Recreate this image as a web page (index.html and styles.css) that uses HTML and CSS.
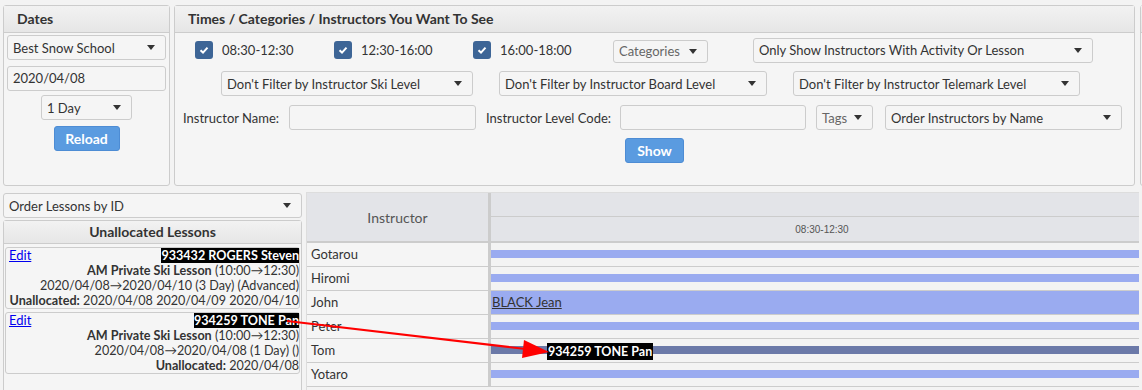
FILE: index.html
```html
<!DOCTYPE html>
<html lang="en">
<head>
    <meta charset="UTF-8">
    <title>Lesson Allocation</title>
    <link rel="stylesheet" href="styles.css">
</head>
<body>
    <div class="top">
        <div class="panel dates">
            <div class="panel-head">Dates</div>
            <div class="dates-body">
                <div class="sel school"><span>Best Snow School</span><span class="caret"></span></div>
                <div class="field date">2020/04/08</div>
                <div class="sel days"><span>1 Day</span><span class="caret"></span></div>
                <button class="btn reload">Reload</button>
            </div>
        </div>

        <div class="panel times">
            <div class="panel-head">Times / Categories / Instructors You Want To See</div>
            <div class="row row1">
                <label class="check"><span class="box"><svg width="12" height="12" viewBox="0 0 12 12"><path d="M2.5 6.3 L5 8.6 L9.5 3.6" fill="none" stroke="#fff" stroke-width="2"/></svg></span>08:30-12:30</label>
                <label class="check"><span class="box"><svg width="12" height="12" viewBox="0 0 12 12"><path d="M2.5 6.3 L5 8.6 L9.5 3.6" fill="none" stroke="#fff" stroke-width="2"/></svg></span>12:30-16:00</label>
                <label class="check"><span class="box"><svg width="12" height="12" viewBox="0 0 12 12"><path d="M2.5 6.3 L5 8.6 L9.5 3.6" fill="none" stroke="#fff" stroke-width="2"/></svg></span>16:00-18:00</label>
                <div class="sel muted categories"><span>Categories</span><span class="caret"></span></div>
                <div class="sel activity"><span>Only Show Instructors With Activity Or Lesson</span><span class="caret"></span></div>
            </div>
            <div class="row row2">
                <div class="sel ski"><span>Don't Filter by Instructor Ski Level</span><span class="caret"></span></div>
                <div class="sel board"><span>Don't Filter by Instructor Board Level</span><span class="caret"></span></div>
                <div class="sel telemark"><span>Don't Filter by Instructor Telemark Level</span><span class="caret"></span></div>
            </div>
            <div class="row row3">
                <span class="lbl name-lbl">Instructor Name:</span>
                <div class="field name-in"></div>
                <span class="lbl code-lbl">Instructor Level Code:</span>
                <div class="field code-in"></div>
                <div class="sel muted tags"><span>Tags</span><span class="caret"></span></div>
                <div class="sel order-ins"><span>Order Instructors by Name</span><span class="caret"></span></div>
            </div>
            <div class="row row4">
                <button class="btn show">Show</button>
            </div>
        </div>

        <div class="panel extra">
            <div class="panel-head"></div>
        </div>
    </div>

    <div class="bottom">
        <div class="left">
            <div class="sel order-lessons"><span>Order Lessons by ID</span><span class="caret"></span></div>
            <div class="panel lessons">
                <div class="lessons-head">Unallocated Lessons</div>
                <div class="card">
                    <div class="card-top"><a href="#">Edit</a><span class="tag">933432 ROGERS Steven</span></div>
                    <div><b>AM Private Ski Lesson</b> (10:00→12:30)</div>
                    <div>2020/04/08→2020/04/10 (3 Day) (Advanced)</div>
                    <div><b>Unallocated:</b> 2020/04/08 2020/04/09 2020/04/10</div>
                </div>
                <div class="card">
                    <div class="card-top"><a href="#">Edit</a><span class="tag">934259 TONE Pan</span></div>
                    <div><b>AM Private Ski Lesson</b> (10:00→12:30)</div>
                    <div>2020/04/08→2020/04/08 (1 Day) ()</div>
                    <div><b>Unallocated:</b> 2020/04/08</div>
                </div>
            </div>
        </div>

        <div class="grid">
            <div class="g-head">
                <div class="g-name-head">Instructor</div>
                <div class="g-time">
                    <div class="g-time-top"></div>
                    <div class="g-time-bot">08:30-12:30</div>
                </div>
            </div>
            <div class="g-row"><div class="g-name">Gotarou</div><div class="g-cell"><div class="bar"></div></div></div>
            <div class="g-row"><div class="g-name">Hiromi</div><div class="g-cell"><div class="bar"></div></div></div>
            <div class="g-row"><div class="g-name">John</div><div class="g-cell"><div class="bar full"><a href="#">BLACK Jean</a></div></div></div>
            <div class="g-row"><div class="g-name">Peter</div><div class="g-cell"><div class="bar"></div></div></div>
            <div class="g-row"><div class="g-name">Tom</div><div class="g-cell"><div class="bar dark"></div></div></div>
            <div class="g-row"><div class="g-name">Yotaro</div><div class="g-cell"><div class="bar"></div></div></div>
        </div>
    </div>

    <!-- lesson being dragged onto Tom -->
    <div class="drag">934259 TONE Pan</div>
    <svg class="arrow" width="1142" height="390">
        <line x1="287" y1="321" x2="526" y2="349" stroke="#f00" stroke-width="2"/>
        <polygon points="549,352 524,340 522,358" fill="#f00"/>
    </svg>
</body>
</html>
```

FILE: styles.css
```css
body {
  margin: 0;
  padding: 5px 3px 0;
  width: 1142px;
  height: 390px;
  box-sizing: border-box;
  overflow: hidden;
  position: relative;
  background-color: #f3f3f3;
  font-family: Lato, "Open Sans", sans-serif;
  font-size: 13px;
  color: #333;
}

.top {
  display: flex;
  gap: 4px;
  height: 181px;
}

.panel {
  flex-shrink: 0;
  box-sizing: border-box;
  border: 1px solid #ccc;
  border-radius: 3px;
  background-color: #f5f5f5;
}

.panel-head {
  height: 26px;
  line-height: 26px;
  padding-left: 13px;
  border-bottom: 1px solid #ccc;
  background: linear-gradient(#f2f2f2, #e6e6e6);
  font-weight: bold;
  font-size: 14px;
  white-space: nowrap;
}

.dates { width: 167px; }
.times { width: 961px; }
.extra { width: 200px; margin-left: 1px; }

/* selects and inputs */
.sel {
  display: flex;
  align-items: center;
  justify-content: space-between;
  flex-shrink: 0;
  box-sizing: border-box;
  height: 25px;
  padding: 0 10px 0 5px;
  border: 1px solid #ccc;
  border-radius: 3px;
  background-color: #f5f5f5;
  white-space: nowrap;
}

.sel.muted { color: #666; }

.caret {
  width: 0;
  height: 0;
  border-left: 4px solid transparent;
  border-right: 4px solid transparent;
  border-top: 5px solid #333;
}

.field {
  flex-shrink: 0;
  box-sizing: border-box;
  height: 25px;
  line-height: 23px;
  padding: 0 5px;
  border: 1px solid #ccc;
  border-radius: 3px;
  background-color: #f5f5f5;
}

.btn {
  box-sizing: border-box;
  height: 25px;
  border: 1px solid #4d8cd4;
  border-radius: 3px;
  background-color: #5a9be0;
  color: white;
  font-family: inherit;
  font-size: 14px;
  font-weight: bold;
  cursor: pointer;
}

/* dates panel */
.dates-body {
  display: flex;
  flex-direction: column;
  align-items: center;
  padding: 2px 2px 0;
}

.school, .date { width: 159px; }
.date { margin-top: 6px; }
.days { width: 91px; margin-top: 4px; }
.reload { width: 66px; margin-top: 6px; }

/* times panel */
.row {
  display: flex;
  align-items: center;
}

.row1 { margin-top: 5px; height: 24px; padding-left: 20px; }
.row2 { margin-top: 9px; height: 25px; padding-left: 46px; gap: 26px; }
.row3 { margin-top: 9px; height: 25px; padding-left: 8px; }
.row4 { margin-top: 8px; padding-left: 450px; }

.check {
  display: flex;
  align-items: center;
  gap: 9px;
  width: 139px;
  flex-shrink: 0;
}

.box {
  display: flex;
  align-items: center;
  justify-content: center;
  width: 18px;
  height: 18px;
  border-radius: 3px;
  background-color: #3d6596;
}

.categories { width: 95px; height: 23px; margin-left: 1px; margin-top: 2px; }
.activity { width: 340px; margin-left: 45px; }

.ski { width: 252px; }
.board { width: 268px; }
.telemark { width: 287px; }

.lbl { white-space: nowrap; flex-shrink: 0; }
.name-lbl { width: 106px; }
.name-in { width: 187px; }
.code-lbl { width: 134px; margin-left: 10px; }
.code-in { width: 186px; }
.tags { width: 57px; margin-left: 10px; }
.order-ins { width: 237px; margin-left: 12px; }

.show { width: 59px; }

/* bottom area */
.bottom {
  display: flex;
  gap: 4px;
  margin-top: 6px;
}

.left { width: 299px; flex-shrink: 0; }

.order-lessons { width: 299px; margin-top: 1px; }

.lessons {
  width: 299px;
  height: 200px;
  margin-top: 2px;
}

.lessons-head {
  height: 22px;
  line-height: 22px;
  text-align: center;
  border-bottom: 1px solid #ccc;
  background: linear-gradient(#f2f2f2, #e6e6e6);
  font-weight: bold;
  font-size: 14px;
}

.card {
  margin: 3px 1px 0;
  padding: 0;
  border: 1px solid #ccc;
  border-radius: 3px;
  font-size: 12.6px;
  line-height: 15px;
  text-align: right;
  white-space: nowrap;
}

.card-top {
  display: flex;
  justify-content: space-between;
}

.card a { color: #00e; padding-left: 3px; font-size: 13px; }

.tag {
  background-color: black;
  color: white;
  font-weight: bold;
}

/* instructor grid */
.grid {
  flex: 1;
  overflow: hidden;
  border-top: 1px solid #ddd;
  border-left: 1px solid #ddd;
  background-color: #f3f3f3;
}

.g-head {
  display: flex;
  height: 48px;
  border-bottom: 2px solid #ccc;
}

.g-name-head {
  display: flex;
  align-items: center;
  justify-content: center;
  width: 181px;
  flex-shrink: 0;
  border-right: 3px solid #ccc;
  background-color: #e3e4e8;
  color: #555;
  font-size: 14px;
}

.g-time {
  width: 662px;
  flex-shrink: 0;
  background-color: #e3e4e8;
}

.g-time-top {
  height: 23px;
  border-bottom: 1px solid #ccc;
}

.g-time-bot {
  height: 24px;
  display: flex;
  align-items: center;
  justify-content: center;
  font-family: "Liberation Sans", Arial, sans-serif;
  font-size: 10px;
  color: #555;
}

.g-row {
  display: flex;
  height: 23px;
  border-bottom: 1px solid #ccc;
}

.g-name {
  width: 177px;
  flex-shrink: 0;
  padding-left: 4px;
  border-right: 3px solid #ccc;
  background-color: #f5f5f5;
  line-height: 23px;
}

.g-cell {
  flex: 1;
  background-color: #f3f3f3;
}

.bar {
  height: 8px;
  margin-top: 7px;
  background-color: #9aabf0;
}

.bar.full {
  height: 23px;
  margin-top: 0;
  line-height: 23px;
  padding-left: 1px;
}

.bar.full a { color: #333; }

.bar.dark { background-color: #6b79a8; }

/* drag overlay */
.drag {
  position: absolute;
  left: 547px;
  top: 343px;
  padding: 0 1px;
  font-size: 12.5px;
  line-height: 17px;
  background-color: black;
  color: white;
  font-weight: bold;
}

.arrow {
  position: absolute;
  left: 0;
  top: 0;
  pointer-events: none;
}
```
